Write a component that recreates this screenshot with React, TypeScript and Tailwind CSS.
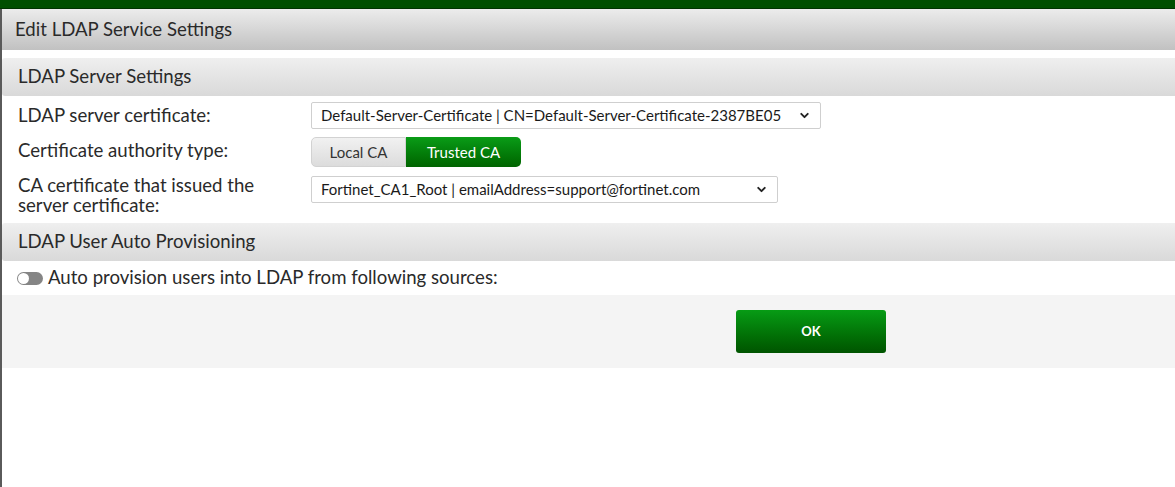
import { ChevronDown } from "lucide-react";

function Select({ value, width }: { value: string; width: string }) {
  return (
    <div
      className={`${width} h-[27px] flex items-center justify-between pl-[9px] pr-[9px] border border-[#cfcfcf] rounded-[2px] bg-white text-[15px] text-[#1a1a1a]`}
    >
      <span>{value}</span>
      <ChevronDown className="w-[13px] h-[13px] text-[#222]" strokeWidth={3.5} />
    </div>
  );
}

function SectionHeader({ title }: { title: string }) {
  return (
    <div className="h-[38px] flex items-center pl-[16px] rounded-tl-[3px] rounded-bl-[3px] bg-gradient-to-b from-[#efefef] to-[#d9d9d9] text-[18.6px] text-[#2a2a2a]">
      {title}
    </div>
  );
}

export default function App() {
  return (
    <div className="w-[1175px] h-[487px] bg-white overflow-hidden font-['Lato','Noto_Sans',sans-serif] flex flex-col">
      {/* top bar */}
      <div className="h-[9px] bg-[#004f00] border-b border-[#003300] shrink-0" />

      <div className="flex-1 border-l-2 border-[#5a5a5a] flex flex-col">
        {/* dialog title */}
        <div className="h-[41px] flex items-center pl-[13px] pt-[1px] bg-gradient-to-b from-[#ececec] to-[#c1c1c1] text-[18.6px] text-[#2a2a2a]">
          Edit LDAP Service Settings
        </div>

        <div className="h-[8px]" />

        <SectionHeader title="LDAP Server Settings" />

        {/* rows */}
        <div className="flex items-center h-[37px] pl-[16px] pt-[2px]">
          <div className="w-[293px] text-[18.6px] text-[#2a2a2a]">LDAP server certificate:</div>
          <Select
            width="w-[510px]"
            value="Default-Server-Certificate | CN=Default-Server-Certificate-2387BE05"
          />
        </div>

        <div className="flex items-center h-[38px] pl-[16px]">
          <div className="w-[293px] text-[18.6px] text-[#2a2a2a] -mt-[2px]">Certificate authority type:</div>
          <div className="flex h-[30px] text-[15px]">
            <div className="w-[95px] flex items-center justify-center rounded-l-[5px] border border-[#d2d2d2] bg-gradient-to-b from-[#f1f1f1] to-[#dcdcdc] text-[#333]">
              Local CA
            </div>
            <div className="w-[115px] flex items-center justify-center rounded-r-[5px] bg-gradient-to-b from-[#0a9c17] to-[#006400] text-white">
              Trusted CA
            </div>
          </div>
        </div>

        <div className="flex items-start h-[52px] pl-[16px] pt-[5px]">
          <div className="w-[293px] text-[18.6px] leading-[20px] text-[#2a2a2a] -mt-[1px]">
            <div>CA certificate that issued the</div>
            <div>server certificate:</div>
          </div>
          <Select
            width="w-[467px]"
            value="Fortinet_CA1_Root | emailAddress=support@fortinet.com"
          />
        </div>

        <SectionHeader title="LDAP User Auto Provisioning" />

        <div className="flex items-center h-[34px] pl-[15px] gap-[5px] text-[18.6px] text-[#2a2a2a]">
          <div className="w-[26px] h-[13px] rounded-full bg-[#858585] relative">
            <div className="absolute left-[1px] top-[1px] w-[11px] h-[11px] rounded-full bg-white" />
          </div>
          <span>Auto provision users into LDAP from following sources:</span>
        </div>

        {/* footer */}
        <div className="h-[73px] bg-[#f4f4f4] flex items-start pl-[734px] pt-[15px]">
          <button className="w-[150px] h-[43px] rounded-[3px] bg-gradient-to-b from-[#079c15] to-[#005400] text-white text-[13px] font-bold">
            OK
          </button>
        </div>
      </div>
    </div>
  );
}
